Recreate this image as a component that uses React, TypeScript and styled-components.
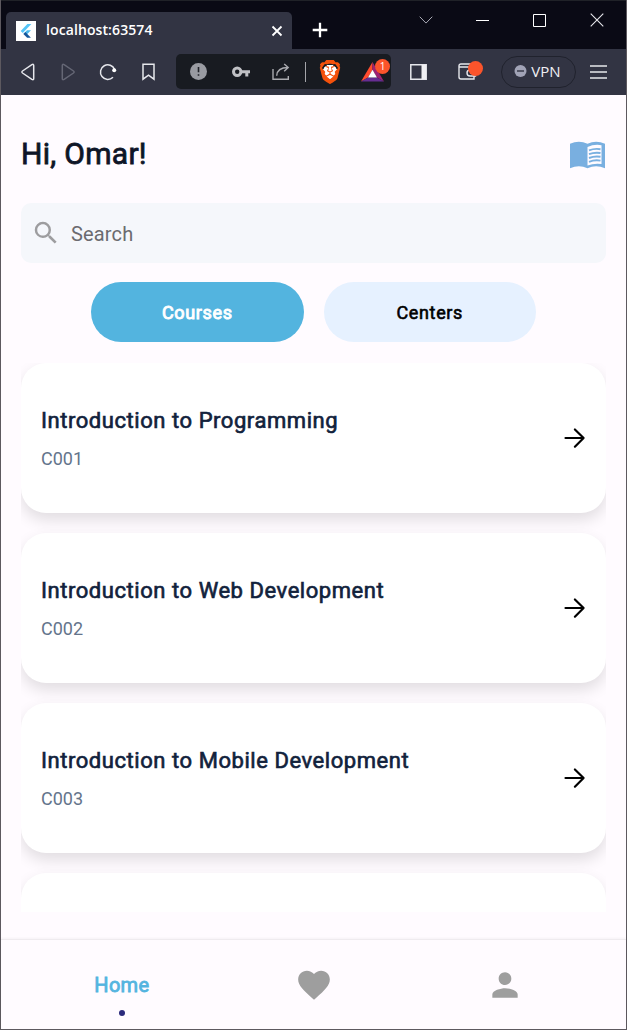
import React from "react";
import styled, { createGlobalStyle } from "styled-components";
import { MdSearch, MdFavorite, MdPerson } from "react-icons/md";
import { SiBrave } from "react-icons/si";

const GlobalStyle = createGlobalStyle`
  *, *::before, *::after { box-sizing: border-box; }
  body { margin: 0; overflow: hidden; font-family: Roboto, sans-serif; }
  svg { display: block; }
`;

const Window = styled.div`
  width: 627px;
  height: 1030px;
  display: flex;
  flex-direction: column;
  background: #fffbff;
  border: 1px solid #5d595f;
  border-top: 0;
`;

const TitleBar = styled.header`
  flex: none;
  height: 49px;
  display: flex;
  background: linear-gradient(90deg, transparent 250px, #1f6fae 250px, #1f6fae 310px, transparent 310px) 0 0 / 100% 1px no-repeat, #0a0a15;
  border-top: 1px solid #202228;
  background-origin: border-box;
`;

const Tab = styled.div`
  width: 286px;
  height: 37px;
  margin: 11px 0 0 5px;
  padding: 0 9px 0 10px;
  display: flex;
  align-items: center;
  background: #323443;
  border-radius: 5px 5px 0 0;
`;

const Favicon = styled.span`
  width: 20px;
  height: 20px;
  background: #fff;
`;

const TabTitle = styled.span`
  flex: 1;
  margin: -2px 0 0 10px;
  color: #fff;
  font: 600 14px/20px "Open Sans", sans-serif;
  letter-spacing: 0.1px;
`;

const Slot = styled.span<{ $w: number }>`
  position: relative;
  flex: none;
  width: ${(p) => p.$w}px;
  height: 100%;
  display: flex;
  align-items: center;
  justify-content: center;
`;

const NewTab = styled(Slot)`
  padding: 10px 0 0 1px;
`;

const WindowControls = styled.div`
  margin: 0 1px 0 auto;
  height: 38px;
  display: flex;
`;

const Toolbar = styled.div`
  flex: none;
  height: 46px;
  padding: 0 0 1px 7px;
  display: flex;
  align-items: center;
  background: #323443;
`;

const AddressBox = styled.div`
  width: 215px;
  height: 35px;
  margin-left: 8px;
  display: flex;
  align-items: center;
  background: #181b21;
  border-radius: 5px;
`;

const Divider = styled.span`
  width: 1px;
  height: 20px;
  margin-left: 4px;
  background: #a4a5aa;
`;

const BraveShield = styled.span`
  width: 24px;
  height: 24px;
  color: #f4510b;
  background: radial-gradient(circle at 50% 50%, #fff 7px, transparent 7.5px);
`;

const Badge = styled.span`
  position: absolute;
  top: 5px;
  left: 21px;
  width: 15px;
  height: 15px;
  border-radius: 50%;
  background: #fb542b;
  color: #fff;
  font: 10px/15px "Open Sans", sans-serif;
  text-align: center;
`;

const WalletBadge = styled(Badge)`
  top: 12px;
  left: 22px;
`;

const VpnPill = styled.div`
  width: 75px;
  height: 32px;
  margin-left: 11px;
  padding: 0 2px 2px 0;
  display: flex;
  align-items: center;
  justify-content: center;
  gap: 4px;
  border: 1px solid #20222d;
  border-radius: 16px;
  color: #f0f0f4;
  font: 15px/20px "Open Sans", sans-serif;
`;

const Page = styled.main`
  flex: 1;
  min-height: 0;
  padding: 38px 20px 0;
  display: flex;
  flex-direction: column;
`;

const Greeting = styled.div`
  height: 42px;
  display: flex;
  align-items: center;
  justify-content: space-between;
  color: #79afe0;
`;

const Hello = styled.h1`
  margin: 0;
  color: #0e1527;
  font-size: 30px;
  font-weight: 400;
  line-height: 42px;
  letter-spacing: 0.3px;
  -webkit-text-stroke: 0.8px currentColor;
`;

const SearchField = styled.div`
  flex: none;
  height: 60px;
  margin-top: 28px;
  padding-left: 10px;
  display: flex;
  align-items: center;
  gap: 10px;
  background: #f5f7fb;
  border-radius: 10px;
  color: #9d9d9f;
`;

const Placeholder = styled.span`
  padding-top: 2px;
  color: #6b6b6f;
  font-size: 20px;
  letter-spacing: 0.15px;
`;

const Filters = styled.div`
  flex: none;
  margin: 19px 0 21px;
  display: flex;
  justify-content: center;
  gap: 20px;
`;

const Filter = styled.button<{ $active?: boolean }>`
  width: 212.5px;
  height: 60px;
  padding: 1px 0 0;
  border: 0;
  border-radius: 30px;
  background: ${(p) => (p.$active ? "#53b4df" : "#e6f1ff")};
  color: ${(p) => (p.$active ? "#fff" : "#000")};
  font: 400 18px Roboto, sans-serif;
  letter-spacing: 0.65px;
  -webkit-text-stroke: ${(p) => (p.$active ? "0.9px" : "0.6px")} currentColor;
`;

const CourseList = styled.div`
  flex: none;
  height: 549px;
  display: flex;
  flex-direction: column;
  gap: 20px;
  overflow: hidden;
`;

const Card = styled.article`
  flex: none;
  height: 150px;
  padding: 0 20px;
  display: flex;
  align-items: center;
  justify-content: space-between;
  background: #fff;
  border-radius: 25px;
  box-shadow: 0 7px 15px rgba(0, 0, 0, 0.12);
`;

const CourseName = styled.h2`
  margin: 0;
  color: #12223c;
  font-size: 22px;
  font-weight: 400;
  line-height: 30px;
  letter-spacing: 0.55px;
  -webkit-text-stroke: 0.65px currentColor;
`;

const CourseCode = styled.p`
  margin: 11px 0 0;
  color: #64748b;
  font-size: 18px;
  line-height: 24px;
`;

const NavBar = styled.nav`
  flex: none;
  height: 90px;
  padding: 0 25px;
  display: flex;
  border-top: 1px solid #efebef;
  box-shadow: 0 -1px 2px rgba(0, 0, 0, 0.04);
  color: #9e9e9e;
`;

const NavItem = styled.div`
  flex: 1;
  position: relative;
  display: flex;
  align-items: center;
  justify-content: center;
  padding-top: 1px;
`;

const NavLabel = styled.span`
  color: #53b4df;
  font-size: 20px;
  letter-spacing: 0.3px;
  -webkit-text-stroke: 0.8px currentColor;
`;

const ActiveDot = styled.span`
  position: absolute;
  left: calc(50% - 3px);
  bottom: 13px;
  width: 6px;
  height: 6px;
  border-radius: 50%;
  background: #2b2a7c;
`;

const courses = [
  { name: "Introduction to Programming", code: "C001" },
  { name: "Introduction to Web Development", code: "C002" },
  { name: "Introduction to Mobile Development", code: "C003" },
];

const Arrow = () => (
  <svg width="22" height="22" viewBox="0 0 22 22" fill="none" stroke="#000" strokeWidth="2.2" strokeLinecap="round" strokeLinejoin="round">
    <path d="M1.5 11H19.6M10.9 2.5 19.6 11l-8.7 8.7" />
  </svg>
);

const OpenBook = () => (
  <svg width="36" height="32" viewBox="0 -3.5 36 32" fill="none">
    <path d="M0 2.3Q9-2 17.500 2.300 26-2 35 2.300V26.700Q26 23 17.500 26.700 9 23 0 26.700z" fill="currentColor" />
    <path d="M17.500 5.500Q24 2.500 31.500 3.700V22.500Q24 21.500 17.500 24z" fill="#fffbff" />
    <path d="M19 8.900q5.500-2.200 11.500-1.200M19 12.700q5.500-2.200 11.500-1.200M19 16.500q5.500-2.200 11.500-1.200M19 20.300q5.500-2.200 11.500-1.200" stroke="currentColor" strokeWidth="1.900" />
  </svg>
);

const FlutterMark = () => (
  <svg width="20" height="20" viewBox="0 0 20 20">
    <path d="M4.7 10 11.4 3h4L6.7 12z" fill="#54c5f8" />
    <path d="M7.4 13 11 9.3h4L11.3 13z" fill="#48b9ed" />
    <path d="m7.4 13 2-2 5.5 5.8h-3.8z" fill="#16579b" />
  </svg>
);

function BrowserChrome() {
  return (
    <>
      <TitleBar>
        <Tab>
          <Favicon><FlutterMark /></Favicon>
          <TabTitle>localhost:63574</TabTitle>
          <svg width="12" height="12" viewBox="0 0 12 12" stroke="#fff" strokeWidth="1.8"><path d="m1.5 1.5 9 9m0-9-9 9" /></svg>
        </Tab>
        <NewTab $w={55}>
          <svg width="16" height="16" viewBox="0 0 16 16" stroke="#fff" strokeWidth="2.3"><path d="M8 .7v14.6M.7 8h14.6" /></svg>
        </NewTab>
        <WindowControls>
          <Slot $w={57}><svg width="14" height="8" viewBox="0 0 14 8" fill="none" stroke="#a9aab5"><path d="m.7.7 6.3 6.4L13.3.7" /></svg></Slot>
          <Slot $w={57}><svg width="13" height="1"><rect width="13" height="1" fill="#fff" /></svg></Slot>
          <Slot $w={57}><svg width="13" height="13" viewBox="0 0 13 13" fill="none" stroke="#fff"><path d="M.5.5h12v12H.5z" /></svg></Slot>
          <Slot $w={57}><svg width="14" height="14" viewBox="0 0 14 14" stroke="#e6e6ea" strokeWidth="1.1"><path d="m.7.7 12.6 12.6m0-12.6L.7 13.3" /></svg></Slot>
        </WindowControls>
      </TitleBar>
      <Toolbar>
        <Slot $w={40}><svg width="14" height="18" viewBox="0 0 14 18" fill="none" stroke="#e6e7ec" strokeWidth="1.5" strokeLinejoin="round"><path d="M12.7 2.5v13q0 1.8-1.8.8L1.5 10q-1.2-1 0-2l9.4-6.3q1.8-1 1.8.8z" /></svg></Slot>
        <Slot $w={40}><svg width="14" height="18" viewBox="0 0 14 18" fill="none" stroke="#656775" strokeWidth="1.5" strokeLinejoin="round"><path d="M1.3 2.5v13q0 1.8 1.8.8L12.5 10q1.2-1 0-2L3.1 1.7q-1.8-1-1.8.8z" /></svg></Slot>
        <Slot $w={40}><svg width="18" height="18" viewBox="0 0 18 18" fill="none" stroke="#e6e7ec" strokeWidth="1.5"><path d="M14 14.2A7.3 7.3 0 1 1 15.6 6.5" /><circle cx="15.2" cy="7.2" r="2" fill="#fff" stroke="none" /></svg></Slot>
        <Slot $w={40}><svg width="13" height="18" viewBox="0 0 13 18" fill="none" stroke="#e6e7ec" strokeWidth="1.5"><path d="M1 1.2h11v15l-5.5-4-5.5 4z" /></svg></Slot>
        <AddressBox>
          <Slot $w={45}><svg width="17" height="17" viewBox="0 0 17 17"><circle cx="8.5" cy="8.5" r="8.5" fill="#999ba2" /><path d="M8.5 4v5.3M8.5 11.2v1.6" stroke="#202229" strokeWidth="1.6" /></svg></Slot>
          <Slot $w={40}><svg width="18" height="12" viewBox="0 0 18 12" fill="none" stroke="#c0c1c5"><circle cx="5.2" cy="5.8" r="3.7" strokeWidth="3" /><path d="M8.8 5.7H18M14.8 6v4.6" strokeWidth="3" /></svg></Slot>
          <Slot $w={40}><svg width="18" height="18" viewBox="0 0 18 18" fill="none" stroke="#a8a9ae" strokeWidth="1.4"><path d="M1 6v10.3h15.3V13M4.7 12.8C5 7 9 4.5 16 4.5M12.2.9l4 3.6-4 3.7" /></svg></Slot>
          <Divider />
          <Slot $w={48}>
            <BraveShield><SiBrave size={24} /></BraveShield>
          </Slot>
          <Slot $w={36}>
            <svg width="23" height="20" viewBox="0 0 23 20"><path d="M11.5 0 0 19.5l7-4L11.5 8z" fill="#ff4b2e" /><path d="M11.5 0 23 19.5l-7-4L11.5 8z" fill="#9e2372" /><path d="M0 19.5h23l-7-4H7z" fill="#662d91" /><path d="m11.5 7.7 4.5 7.8H7z" fill="#fff" /></svg>
            <Badge>1</Badge>
          </Slot>
        </AddressBox>
        <Slot $w={55}><svg width="17" height="16" viewBox="0 0 17 16"><path d="M.8.8h15.4v14.4H.8z" fill="none" stroke="#e6e7ec" strokeWidth="1.5" /><path d="M11.5.8H16v14.4h-4.5z" fill="#f0f0f3" /></svg></Slot>
        <Slot $w={42}>
          <svg width="19" height="17" viewBox="0 0 19 17" fill="none" stroke="#e6e7ec" strokeWidth="1.4"><path d="M16 4V1H3Q1 1 1 3v11q0 2 2 2h13v-3M1 4h15v3M17.5 7H12q-3 0-3 3t3 3h5.5zM12 10h1.5" /></svg>
          <WalletBadge />
        </Slot>
        <Slot $w={2} />
        <VpnPill>
          <svg width="13" height="13" viewBox="0 0 13 13"><circle cx="6.5" cy="7" r="6" fill="#a1a3b6" /><path d="M3 7h7" stroke="#323443" strokeWidth="1.4" /></svg>
          VPN
        </VpnPill>
        <Slot $w={45}><svg width="17" height="14" viewBox="0 0 17 14" stroke="#e6e7ec" strokeWidth="1.4"><path d="M0 1h17M0 7h17M0 13h17" /></svg></Slot>
      </Toolbar>
    </>
  );
}

export default function App() {
  return (
    <Window>
      <GlobalStyle />
      <BrowserChrome />
      <Page>
        <Greeting>
          <Hello>Hi, Omar!</Hello>
          <OpenBook />
        </Greeting>
        <SearchField>
          <MdSearch size={30} />
          <Placeholder>Search</Placeholder>
        </SearchField>
        <Filters>
          <Filter $active>Courses</Filter>
          <Filter>Centers</Filter>
        </Filters>
        <CourseList>
          {courses.map((c) => (
            <Card key={c.code}>
              <div>
                <CourseName>{c.name}</CourseName>
                <CourseCode>{c.code}</CourseCode>
              </div>
              <Arrow />
            </Card>
          ))}
          <Card />
        </CourseList>
      </Page>
      <NavBar>
        <NavItem>
          <NavLabel>Home</NavLabel>
          <ActiveDot />
        </NavItem>
        <NavItem><MdFavorite size={38} /></NavItem>
        <NavItem><MdPerson size={38} /></NavItem>
      </NavBar>
    </Window>
  );
}
